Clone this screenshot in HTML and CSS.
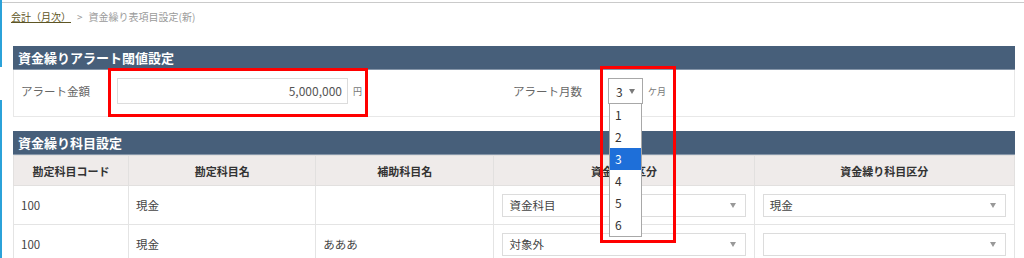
FILE: index.html
```html
<!DOCTYPE html>
<html lang="ja">
<head>
    <meta charset="UTF-8">
    <title>資金繰り表項目設定(新)</title>
    <link rel="stylesheet" href="styles.css">
</head>
<body>
    <div class="frame">
        <div class="edge">
            <span class="edge-seg top"></span>
            <span class="edge-gap"></span>
            <span class="edge-seg bottom"></span>
        </div>
        <div class="page">
            <nav class="crumbs">
                <a href="#">会計（月次）</a>
                <span class="sep">&gt;</span>
                <span>資金繰り表項目設定(新)</span>
            </nav>

            <section class="panel">
                <h2 class="panel-title">資金繰りアラート閾値設定</h2>
                <div class="alert-body">
                    <div class="field">
                        <span class="field-label">アラート金額</span>
                        <span class="amount">5,000,000</span>
                        <span class="unit">円</span>
                    </div>
                    <div class="field">
                        <span class="field-label short">アラート月数</span>
                        <div class="month-select">
                            <span class="month-value">3 <i class="caret"></i></span>
                            <ul class="month-list">
                                <li>1</li>
                                <li>2</li>
                                <li class="selected">3</li>
                                <li>4</li>
                                <li>5</li>
                                <li>6</li>
                            </ul>
                        </div>
                        <span class="unit">ケ月</span>
                    </div>
                </div>
            </section>

            <section class="panel">
                <h2 class="panel-title">資金繰り科目設定</h2>
                <table class="grid">
                    <colgroup>
                        <col style="width: 115px">
                        <col style="width: 187px">
                        <col style="width: 178px">
                        <col style="width: 260px">
                        <col style="width: 260px">
                    </colgroup>
                    <thead>
                        <tr>
                            <th>勘定科目コード</th>
                            <th>勘定科目名</th>
                            <th>補助科目名</th>
                            <th>資金繰り区分</th>
                            <th>資金繰り科目区分</th>
                        </tr>
                    </thead>
                    <tbody>
                        <tr>
                            <td>100</td>
                            <td>現金</td>
                            <td></td>
                            <td class="sel-cell"><div class="cell-select"><span>資金科目</span><i class="caret light"></i></div></td>
                            <td class="sel-cell"><div class="cell-select"><span>現金</span><i class="caret light"></i></div></td>
                        </tr>
                        <tr>
                            <td>100</td>
                            <td>現金</td>
                            <td>あああ</td>
                            <td class="sel-cell"><div class="cell-select"><span>対象外</span><i class="caret light"></i></div></td>
                            <td class="sel-cell"><div class="cell-select"><span></span><i class="caret light"></i></div></td>
                        </tr>
                    </tbody>
                </table>
            </section>

            <!-- annotation frames -->
            <div class="mark mark-amount"></div>
            <div class="mark mark-month"></div>
        </div>
    </div>
</body>
</html>
```

FILE: styles.css
```css
* {
    margin: 0;
    padding: 0;
    box-sizing: border-box;
}

body {
    font-family: "Noto Sans CJK JP", "Noto Sans", sans-serif;
    background-color: #fff;
    color: #555;
    height: 258px;
    overflow: hidden;
}

.frame {
    display: flex;
    height: 258px;
}

/* blue strip on the left edge */
.edge {
    flex: none;
    width: 2px;
    display: flex;
    flex-direction: column;
}

.edge-seg {
    background-color: #2ba2d9;
}

.edge-seg.top {
    height: 67px;
}

.edge-gap {
    height: 33px;
}

.edge-seg.bottom {
    flex: 1;
}

.page {
    flex: 1;
    position: relative;
    margin-top: 2px;
    border-top: 1px solid #cacaca;
    padding: 0 9px 0 9px;
}

.crumbs {
    display: flex;
    gap: 6px;
    padding-top: 7px;
    font-size: 10px;
    line-height: 14px;
    color: #9a9a9a;
}

.crumbs a {
    color: #5e5524;
    text-decoration: underline;
}

.panel {
    margin-left: 2px;
    margin-top: 22px;
}

.panel + .panel {
    margin-top: 14px;
}

.panel-title {
    height: 24px;
    line-height: 24px;
    padding-left: 5px;
    background-color: #475f7a;
    border-bottom: 1px solid #8595a8;
    color: #fff;
    font-size: 13px;
    font-weight: bold;
}

/* alert threshold row */
.alert-body {
    display: grid;
    grid-template-columns: 499px 1fr;
    height: 47px;
    padding-top: 8px;
    border: 1px solid #e8e8e8;
    border-top: none;
}

.field {
    display: flex;
    align-items: center;
    height: 26px;
    padding-left: 7px;
}

.field-label {
    width: 96px;
    font-size: 11.5px;
    color: #666;
}

.field-label.short {
    width: 95px;
}

.field:nth-child(2) {
    padding-left: 0;
}

.amount {
    width: 231px;
    height: 26px;
    line-height: 24px;
    padding-right: 5px;
    border: 1px solid #dcdcdc;
    text-align: right;
    font-size: 12px;
    color: #555;
}

.unit {
    margin-left: 5px;
    font-size: 9px;
    color: #777;
}

.month-select {
    position: relative;
    width: 35px;
    height: 26px;
}

.month-value {
    display: flex;
    align-items: center;
    gap: 6px;
    height: 26px;
    padding-left: 7px;
    border: 1px solid #a8a8a8;
    font-size: 12px;
    color: #333;
}

.caret {
    display: inline-block;
    width: 0;
    height: 0;
    border-left: 3px solid transparent;
    border-right: 3px solid transparent;
    border-top: 5px solid #7a7a7a;
}

.caret.light {
    border-top-color: #999;
}

.month-list {
    position: absolute;
    top: 100%;
    left: 1px;
    right: 1px;
    list-style: none;
    background-color: #fff;
    border: 1px solid #a8a8a8;
    border-top: none;
    z-index: 2;
}

.month-list li {
    height: 22px;
    line-height: 22px;
    padding-left: 5px;
    font-size: 12px;
    color: #333;
}

.month-list li.selected {
    background-color: #1e6fd9;
    color: #fff;
}

/* account table */
.grid {
    width: 100%;
    border-collapse: collapse;
    table-layout: fixed;
    font-size: 11.5px;
}

.grid th {
    height: 30px;
    background-color: #efebea;
    border: 1px solid #e2e0df;
    color: #333;
    font-size: 11px;
    font-weight: bold;
}

.grid td {
    height: 39px;
    padding: 0 7px;
    border: 1px solid #e4e4e4;
    color: #444;
}

.grid td.sel-cell {
    padding: 0 8px;
}

.cell-select {
    display: flex;
    align-items: center;
    justify-content: space-between;
    height: 23px;
    padding: 0 9px 0 6px;
    border: 1px solid #dcdcdc;
    color: #444;
}

/* red annotation frames */
.mark {
    position: absolute;
    border: 3px solid #f00;
    z-index: 3;
}

.mark-amount {
    left: 106px;
    top: 65px;
    width: 260px;
    height: 49px;
}

.mark-month {
    left: 598px;
    top: 63px;
    width: 76px;
    height: 177px;
}
```
